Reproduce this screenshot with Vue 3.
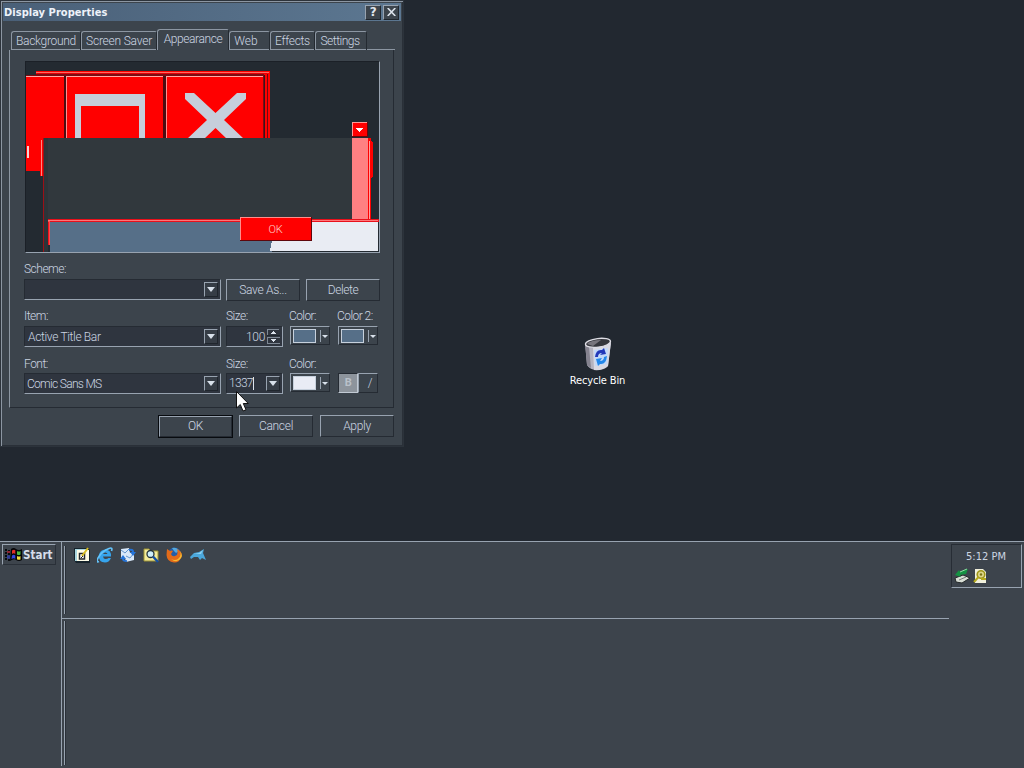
<script setup>
const tabs = [
  { name: 'Background', cls: 't-bg' },
  { name: 'Screen Saver', cls: 't-ss' },
  { name: 'Appearance', cls: 't-ap' },
  { name: 'Web', cls: 't-web' },
  { name: 'Effects', cls: 't-fx' },
  { name: 'Settings', cls: 't-set' }
]
</script>

<template>
  <div class="screen">
    <main class="desktop">
      <section class="dialog">
        <header class="titlebar">
          <span class="title">Display Properties</span>
          <button class="cap">?</button>
          <button class="cap">
            <svg width="9" height="8" viewBox="0 0 9 8"><path d="M.7 0 8.300 8M8.300 0 .7 8" stroke="#dce3ec" stroke-width="1.600" /></svg>
          </button>
        </header>

        <nav class="tabs">
          <span v-for="t in tabs" :key="t.name" class="tab" :class="t.cls"><span>{{ t.name }}</span></span>
          <i class="tabline"></i>
        </nav>

        <div class="panel">
          <div class="preview">
            <svg width="353" height="190" viewBox="26 62 353 190">
              <rect x="26" y="62" width="353" height="190" fill="#232a31" />
              <g shape-rendering="crispEdges">
                <path d="M36 71H270V138H36z" fill="#f00" />
                <rect x="36" y="72" width="233" height="1" fill="#ff6a60" />
                <path d="M36 74H264V138H26V75H36z" fill="#7d0b12" />
                <rect x="37" y="73" width="230" height="1" fill="#e00008" />
                <rect x="264" y="75" width="1" height="63" fill="#38151b" />
                <rect x="267" y="74" width="1" height="64" fill="#6d0a10" />
                <path d="M26 76H263V138H26z" fill="#f00" />
                <rect x="26" y="76" width="237" height="1" fill="#ffaaa8" />
                <rect x="26" y="138" width="15" height="33" fill="#f00" />
                <rect x="64" y="76" width="2" height="62" fill="#4b0d13" />
                <rect x="66" y="77" width="1" height="61" fill="#ff9090" />
                <rect x="163" y="76" width="3" height="62" fill="#4b0d13" />
                <rect x="166" y="77" width="1" height="61" fill="#ff9090" />
                <path d="M75 94H145V138H139V106H81V138H75z" fill="#c6cedb" />
                <rect x="27" y="146" width="2" height="12" fill="#f1d5d5" />
              </g>
              <path d="M185 93H194L215.500 113 237 93H246V99L224 120 244 139H227L215.500 128 204 139H187L207 120 185 99z" fill="#c6cedb" />
              <g shape-rendering="crispEdges">
                <rect x="40" y="138" width="3" height="38" fill="#f00" />
                <rect x="41" y="140" width="1" height="36" fill="#ff8580" />
                <rect x="43" y="138" width="1" height="114" fill="#9c1017" />
                <rect x="44" y="138" width="308" height="81" fill="#31383d" />
                <rect x="44" y="138" width="4" height="114" fill="#2d3439" />
                <rect x="352" y="122" width="16" height="15" fill="#66060b" />
                <rect x="352" y="122" width="15" height="14" fill="#ff9a96" />
                <rect x="353" y="123" width="14" height="13" fill="#f00" />
                <path d="M356 128H363L359.500 132z" fill="#fff" />
                <rect x="352" y="138" width="16" height="81" fill="#ff8082" />
                <rect x="368" y="138" width="3" height="81" fill="#f00" />
                <rect x="369" y="141" width="1" height="78" fill="#ffa09e" />
                <path d="M370 140L373 143V176L370 179z" fill="#f00" />
                <rect x="48" y="219" width="331" height="3" fill="#e8101b" />
                <rect x="48" y="220" width="330" height="1" fill="#ff7577" />
                <rect x="48" y="221" width="2" height="24" fill="#ff4a4c" />
                <rect x="48" y="222" width="1" height="23" fill="#f4111b" />
                <rect x="50" y="222" width="222" height="30" fill="#566f88" />
                <path d="M272 222H378V251H270L272 240z" fill="#e9ecf3" />
                <rect x="240" y="217" width="72" height="24" fill="#5e070c" />
                <rect x="240" y="217" width="71" height="23" fill="#ff8d8b" />
                <rect x="241" y="218" width="70" height="22" fill="#f00" />
              </g>
              <text x="268.500" y="233" font-size="11" textLength="14" fill="#ffd0c8">OK</text>
            </svg>
          </div>

          <div class="row">
            <div class="field wide">
              <label>Scheme:</label>
              <div class="select"><span></span><i class="drop"></i></div>
            </div>
            <button class="btn save">Save As...</button>
            <button class="btn del">Delete</button>
          </div>

          <div class="row">
            <div class="field wide">
              <label>Item:</label>
              <div class="select"><span class="v-item">Active Title Bar</span><i class="drop"></i></div>
            </div>
            <div class="field size">
              <label>Size:</label>
              <div class="select num"><span>100</span>
                <svg class="spin" width="13" height="15" viewBox="0 0 13 15" shape-rendering="crispEdges">
                  <path d="M.5 6V.5H12M0 8.500H13M.5 8V14M0 14.500H13" fill="none" stroke="#7e8894" />
                  <path d="M0 6.500H13" stroke="#20272f" />
                  <path d="M4 5H9L6.500 2zM4 10H9L6.500 13z" fill="#dce3ec" />
                </svg>
              </div>
            </div>
            <div class="field color">
              <label>Color:</label>
              <div class="swatch"><b></b><i></i></div>
            </div>
            <div class="field color second">
              <label>Color 2:</label>
              <div class="swatch"><b></b><i></i></div>
            </div>
          </div>

          <div class="row last">
            <div class="field wide">
              <label>Font:</label>
              <div class="select"><span class="v-font">Comic Sans MS</span><i class="drop"></i></div>
            </div>
            <div class="field size">
              <label>Size:</label>
              <div class="select edit"><span>1337</span><i class="drop"></i></div>
            </div>
            <div class="field color">
              <label>Color:</label>
              <div class="swatch white"><b></b><i></i></div>
            </div>
            <div class="styles">
              <button class="bold">B</button>
              <button class="ital">/</button>
            </div>
          </div>
        </div>

        <footer class="actions">
          <button class="btn ok">OK</button>
          <button class="btn">Cancel</button>
          <button class="btn">Apply</button>
        </footer>
      </section>

      <div class="bin">
        <svg width="28" height="34" viewBox="0 0 28 34">
          <path d="M1 6 3 28Q6 33 13 33 21 33 24 29L27 4z" fill="#b4b3bf" />
          <path d="M1 6 3 28 7 31 5 10z" fill="#85838f" />
          <path d="M9 11 10 33Q18 34 24 29L27 6z" fill="#d9d9e2" />
          <ellipse cx="14" cy="5.800" rx="12.600" ry="4.300" fill="#35363c" stroke="#dddde4" stroke-width="1.300" transform="rotate(-7 14 6)" />
          <path d="M3 7Q7 3 17 3L9 9z" fill="#77757c" />
          <path d="M10 13 24 11 23 27 11 29z" fill="#c3d9f8" />
          <path d="M11 20Q12 12 18 13L20 11 22 17 16 18 18 16Q14 16 14 20z" fill="#2238b8" />
          <path d="M23 19Q22 28 16 27L14 29 12 22 18 21 16 24Q20 24 20 20z" fill="#2387ea" />
        </svg>
        <span>Recycle Bin</span>
      </div>

      <svg class="cursor" width="13" height="21" viewBox="0 0 13 21">
        <path d="M.5 .5V17L4.300 13.500 7 20 10 18.800 7.300 12.500H12.300z" fill="#fff" stroke="#111" />
      </svg>
    </main>

    <footer class="taskbar">
      <div class="startcol">
        <button class="start">
          <svg width="17" height="15" viewBox="0 0 17 15">
            <path d="M6 2Q9 0 11 2 14 4 17 2V13Q14 15 11 13 9 11 5 14z" fill="#050608" />
            <path d="M0 3H2M0 6H2M0 9H2M0 12H2M3 4H5M3 7H5M3 10H5M3 13H5" stroke="#090b0e" stroke-width="2" />
            <path d="M2 4H5V6H2z" fill="#8d2431" />
            <path d="M7 3.500Q9 2 10.300 3.200V7Q8.500 5.700 7 7z" fill="#e22d25" />
            <path d="M12 4Q14 5 15.500 4V7.500Q13.500 8.500 12 7.500z" fill="#49bb40" />
            <path d="M7 8.500Q9 7.200 10.300 8.500V12Q9 10.500 6.500 12z" fill="#3446dc" />
            <path d="M12 9Q14 10 15.500 9V12.500Q13.500 13.300 12 12.300z" fill="#f1dc3c" />
            <path d="M2 8.500H5V11.500H2z" fill="#303b9b" />
          </svg>
          <span>Start</span>
        </button>
      </div>
      <div class="bands">
        <div class="band quick">
          <i class="grip"></i>
          <svg width="16" height="16" viewBox="0 0 16 16">
            <path d="M0 1H14L16 3V16H2L0 13z" fill="#16232c" />
            <path d="M1 2H13V14H1z" fill="#a9d5de" />
            <path d="M3 3H15V14H3z" fill="#fffde8" />
            <path d="M5.500 6.500H10.500V12H5.500z" fill="#fff" stroke="#26292c" stroke-width="1.500" />
            <path d="M8 9 14 1" stroke="#d8bd24" stroke-width="2" /><path d="M7 11 9 9" stroke="#222" />
          </svg>
          <svg width="16" height="16" viewBox="0 0 16 16">
            <path d="M14 9.500H6Q6.500 12 8.500 12 10.500 12 11.500 11H14Q12 15.500 8 15.500 1.500 15 1.700 8.500 3 2.500 8.500 2.500 14.500 3 14 9.500zM6 7H10.500Q10 5.500 8.500 5.500 6.500 5.500 6 7z" fill="#36a4ed" fill-rule="evenodd" />
            <path d="M2 14.500Q-1 16 1 11 5 4 12 1.500 16 0 14.500 4" fill="none" stroke="#63c3fa" stroke-width="1.600" />
          </svg>
          <svg width="16" height="16" viewBox="0 0 16 16">
            <path d="M1 2 9 1 10 6 14 5V13L6 15 5 11 1 11z" fill="#d8e8fa" />
            <path d="M1 3 5 6 9 2M6 9 10 11 14 6" fill="none" stroke="#6494cc" />
            <path d="M9 2Q14 1 14 5L16 5 13 9 10 5H12Q12 3 9 4zM7 15Q2 15 2 12L0 12 3 8 6 12H4Q5 14 7 13z" fill="#2373d9" />
          </svg>
          <svg width="16" height="16" viewBox="0 0 16 16">
            <path d="M1 2H6L8 4H15V14H1z" fill="#f4ec9b" stroke="#9d9232" />
            <circle cx="7.500" cy="7" r="3.500" fill="#cdeefa" stroke="#24333b" stroke-width="1.300" />
            <path d="M10 9.500 15 15" stroke="#164fa0" stroke-width="2.500" />
          </svg>
          <svg width="16" height="16" viewBox="0 0 16 16">
            <circle cx="8.500" cy="7" r="6.500" fill="#245da8" />
            <path d="M6 1Q11 0 13 4L10 6 8 4z" fill="#55a8dc" />
            <path d="M1 2 4 4Q6 3 7 4L5 7Q6 10 9 9L11 8Q12 5 11 2 17 5 15.500 10 13 16 8 15.500 1 15 .5 8z" fill="#e36b19" />
            <path d="M14 4Q16 9 12 12 9 14 5 12 11 17 15 11 17 8 14 4z" fill="#f8bd32" />
          </svg>
          <svg class="last-icon" width="16" height="16" viewBox="0 0 16 16">
            <path d="M0 10 4 6 9 5 14 2 13 6 16 13 12 11 10 13 8 10 4 10 1 12z" fill="#4ba7db" />
            <path d="M4 7 9 6 13 3 11 7z" fill="#8dd2f2" />
          </svg>
        </div>
        <div class="band tasks"><i class="grip"></i></div>
      </div>
      <div class="tray">
        <div class="clockbox">
          <time>5:12 PM</time>
          <div class="trayicons">
            <svg width="17" height="16" viewBox="0 0 17 16">
              <path d="M1 10 9 7 16 10 8 15 2 14z" fill="#d8ddd5" stroke="#252a2a" />
              <path d="M5 12 12 9" stroke="#747c77" />
              <path d="M1 7 5 2 6 4 14 1 12 6 6 7 7 9z" fill="#149242" />
              <path d="M6 4 13 1" stroke="#8ee5a3" />
            </svg>
            <svg width="15" height="16" viewBox="0 0 15 16">
              <path d="M2 1H10L13 4V15H2z" fill="#f2f1dc" />
              <circle cx="8" cy="6.500" r="3.800" fill="#ddd58a" stroke="#9f9619" stroke-width="1.600" />
              <circle cx="8" cy="6.500" r="1.200" fill="#7a7416" />
              <path d="M5.500 9 1 14M8 11H13" stroke="#b4a91c" stroke-width="2" />
            </svg>
          </div>
        </div>
      </div>
    </footer>
  </div>
</template>

<style>
body { margin: 0; background: #22272f; }
</style>

<style scoped>
* { box-sizing: border-box; }
svg { display: block; flex: none; }
button { font: inherit; color: inherit; padding: 0; margin: 0; border: 0; background: none; letter-spacing: inherit; }
.screen {
  width: 1024px; height: 768px; display: flex; flex-direction: column; overflow: hidden;
  font: 300 12px/14px Roboto, "Liberation Sans", sans-serif; color: #ccd6e2; background: #232830;
  letter-spacing: -0.3px;
}
.desktop { position: relative; height: 541px; background: #222830; }

/* dialog window */
.dialog {
  position: absolute; left: 0; top: 0; width: 404px; height: 447px; padding: 2px 2px 0 2px;
  background: #3c444c; border: 1px solid #2c333b;
  box-shadow: inset 1px 1px #8c96a2, inset -1px -1px #2a3038;
  display: flex; flex-direction: column;
}
.titlebar {
  height: 18px; flex: none; display: flex; align-items: center; padding: 0 2px 0 1px;
  background: linear-gradient(90deg, #4a6078, #5c7791);
}
.title { flex: 1; padding-top: 1px; font: bold 11px/16px "DejaVu Sans Condensed", "DejaVu Sans", sans-serif; font-stretch: condensed; color: #edf2f9; letter-spacing: 0.05px; }
.cap {
  width: 16px; height: 15px; margin-left: 2px; display: flex; align-items: center; justify-content: center;
  background: #3c444c; border: 1px solid; border-color: #98a3b0 #20262d #20262d #98a3b0;
  font: bold 12px/13px "DejaVu Sans", sans-serif; color: #e0e7ef;
}
.tabs { display: flex; align-items: flex-end; height: 29px; padding-left: 7px; flex: none; }
.tab {
  height: 19px; border: 1px solid #8c96a2; border-right-color: #242a31; border-bottom: 0; border-radius: 3px 2px 0 0;
  display: flex; justify-content: center; align-items: center; white-space: nowrap; flex: none;
  box-shadow: inset 0 -1px #8c96a2; padding-bottom: 1px;
}
.t-bg { width: 70px; margin-left: 1px; }
.t-ss { width: 76px; letter-spacing: -0.22px; }
.t-ap { width: 72px; height: 21px; box-shadow: none; padding-bottom: 3px; letter-spacing: -0.4px; }
.t-web { width: 41px; padding-right: 7px; letter-spacing: 0; }
.t-fx { width: 45px; }
.t-set { width: 52px; padding-right: 2px; letter-spacing: -0.5px; }
.tabline { flex: 1; height: 1px; background: #8c96a2; margin-right: 6px; }
.panel {
  margin-left: 6px; width: 385px; height: 358px; padding: 11px 13px 0 14px; flex: none;
  border: 1px solid; border-color: transparent #252b33 #252b33 #8c96a2; border-top: 0;
}
.preview { width: 355px; height: 192px; margin-left: 1px; border: 1px solid; border-color: #1b2027 #98a3b0 #98a3b0 #1b2027; }
.row { display: flex; height: 47px; align-items: flex-end; }
.field { display: flex; flex: none; flex-direction: column; height: 47px; }
.field label { display: block; height: 26px; padding-top: 9px; white-space: nowrap; letter-spacing: -0.5px; }
.last label { padding-top: 10px; }
.wide { width: 197px; margin-right: 5px; }
.size { width: 57px; margin-right: 7px; }
.color { width: 40px; margin-right: 8px; }
.color label { margin-left: -1px; letter-spacing: -0.6px; }
.second { margin-right: 0; }
.second label { letter-spacing: -0.55px; }
.select {
  height: 21px; display: flex; align-items: center; padding: 0 2px 0 3px; background: #2f353f;
  border: 1px solid; border-color: #252b33 #98a3b0 #98a3b0 #252b33;
}
.select span { flex: 1; white-space: nowrap; }
.v-item { padding-top: 1px; letter-spacing: -0.35px; }
.v-font { margin-left: -1px; letter-spacing: -0.7px; }
.drop {
  width: 14px; height: 15px; display: flex; align-items: center; justify-content: center; background: #363d46;
  border: 1px solid; border-color: #98a3b0 #20262d #20262d #98a3b0;
}
.drop::before { content: ""; border: 4px solid transparent; border-top: 5px solid #d8e0ea; border-bottom: 0; }
.num span { text-align: right; padding-right: 2px; }
.edit { padding-left: 2px; }
.edit span { flex: none; width: 25px; border-right: 1px solid #dce3ec; line-height: 13px; letter-spacing: -0.7px; margin-right: auto; }
.swatch {
  height: 19px; margin-bottom: 2px; display: flex; align-items: center; padding-left: 3px;
  border: 1px solid; border-color: #98a3b0 #252b33 #252b33 #98a3b0;
}
.swatch b { width: 23px; height: 14px; background: #566f88; border: 1px solid #c6d0dc; margin-left: -1px; }
.white b { background: #e9ecf5; }
.swatch i { height: 12px; border-left: 1px solid #98a3b0; margin-left: 4px; padding: 5px 0 0 1px; }
.swatch i::before { content: ""; display: block; border: 3px solid transparent; border-top-color: #d8e0ea; border-bottom: 0; }
.btn {
  width: 74px; height: 22px; line-height: 20px; text-align: center;
  border: 1px solid; border-color: #98a3b0 #252b33 #252b33 #98a3b0;
}
.row .btn { margin-bottom: -1px; }
.save { margin-right: 6px; }
.del { letter-spacing: -0.4px; }
.styles { display: flex; height: 21px; }
.styles button { width: 20px; height: 20px; border: 1px solid; }
.styles .bold { background: #8d949c; border-color: #252b33 #c2cad4 #c2cad4 #252b33; color: #b9c1ca; font-weight: 700; font-size: 11px; }
.styles .ital { border-color: #98a3b0 #252b33 #252b33 #98a3b0; padding-left: 4px; }
.actions { display: flex; gap: 7px; margin: 6px 0 0 154px; height: 24px; align-items: center; }
.actions .ok { outline: 1px solid #080b0f; width: 73px; height: 21px; line-height: 19px; margin: 0 0 0 2px; }

/* desktop items */
.bin {
  position: absolute; left: 559px; top: 337px; width: 78px; display: flex; flex-direction: column; align-items: center;
  font: 11px/14px "DejaVu Sans Condensed", "DejaVu Sans", sans-serif; font-stretch: condensed; color: #fff;
}
.bin span { margin-top: 3px; margin-left: -1px; letter-spacing: -0.15px; }
.cursor { position: absolute; left: 236px; top: 391px; }

/* taskbar */
.taskbar { height: 227px; display: flex; background: #3d444c; border-top: 1px solid #98a3b0; }
.startcol { width: 62px; border-right: 1px solid #98a3b0; padding: 2px 0 0 2px; margin-bottom: 2px; }
.start {
  width: 54px; height: 21px; display: flex; align-items: center; padding-left: 2px; gap: 1px;
  border: 1px solid; border-color: #98a3b0 #2a3038 #2a3038 #98a3b0;
  font: bold 11.5px/16px "DejaVu Sans Condensed", "DejaVu Sans", sans-serif; font-stretch: condensed; color: #d6deea;
  letter-spacing: 0;
}
.bands { width: 887px; display: flex; flex-direction: column; }
.band { display: flex; padding: 4px 0 4px 2px; }
.quick { height: 77px; border-bottom: 1px solid #98a3b0; gap: 7px; }
.quick svg { margin-top: 1px; }
.quick .last-icon { margin-left: 1px; }
.quick .grip { margin-right: 1px; }
.tasks { flex: 1; padding: 2px 0 3px 2px; }
.grip { width: 2px; border-left: 1px solid #98a3b0; border-right: 1px solid #2a3038; }
.tray { flex: 1; padding: 2px 2px 0 2px; }
.clockbox {
  height: 44px; border: 1px solid; border-color: #272d35 #98a3b0 #98a3b0 #272d35;
  display: flex; flex-direction: column;
}
.clockbox time { text-align: center; font: 11px/14px "DejaVu Sans Condensed", "DejaVu Sans", sans-serif; font-stretch: condensed; padding: 5px 1px 0 0; letter-spacing: 0; }
.trayicons { display: flex; gap: 2px; padding: 4px 0 0 2px; }
</style>
